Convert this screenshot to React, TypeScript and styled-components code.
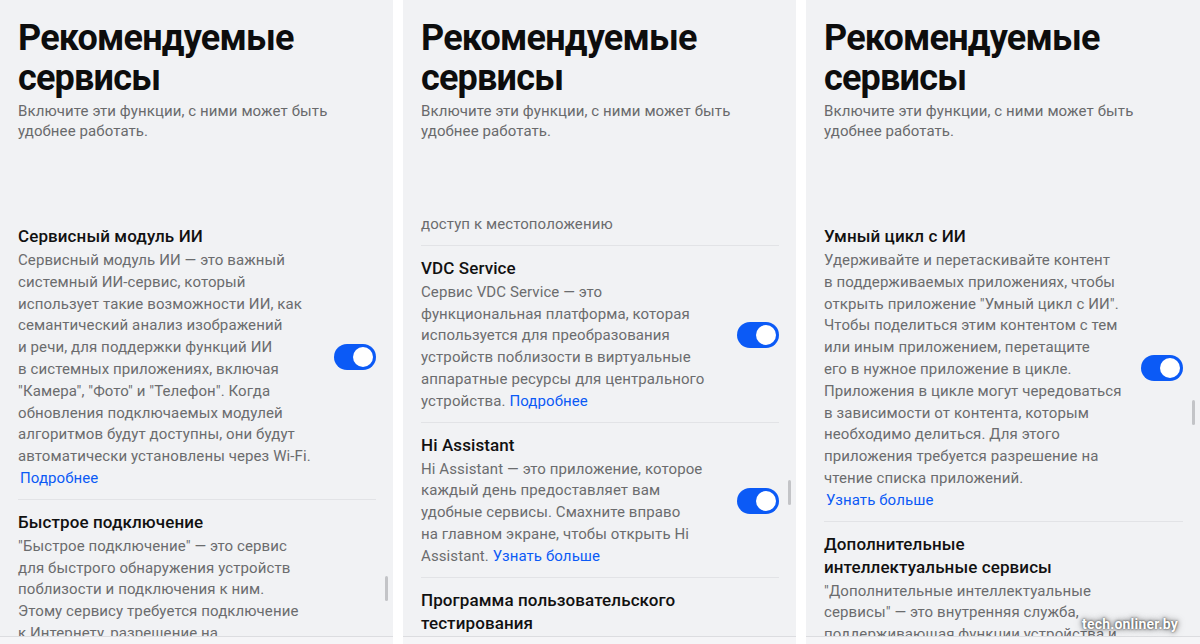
import React from "react";
import styled, { createGlobalStyle } from "styled-components";

const GlobalStyle = createGlobalStyle`
  html, body { margin: 0; padding: 0; background: #ffffff; }
  body { font-family: Roboto, "Noto Sans", "Liberation Sans", sans-serif; -webkit-font-smoothing: antialiased; }
  * { box-sizing: border-box; }
`;

const Screen = styled.div`
  display: flex;
  gap: 10px;
  width: 1200px;
  height: 644px;
  overflow: hidden;
  background: #ffffff;
`;

const Panel = styled.section<{ $w: number }>`
  position: relative;
  flex: 0 0 ${(p) => p.$w}px;
  height: 644px;
  display: flex;
  flex-direction: column;
  background: #f1f2f4;
  overflow: hidden;
`;

const Header = styled.header`
  flex: 0 0 214px;
  padding: 18px 18px 0;
`;

const Title = styled.h1`
  margin: 0;
  font-size: 36px;
  line-height: 40px;
  font-weight: 700;
  letter-spacing: -0.8px;
  color: #0d0d0d;
`;

const Subtitle = styled.p`
  margin: 3px 0 0;
  font-size: 15px;
  line-height: 20px;
  letter-spacing: 0.1px;
  color: #696a6c;
`;

const List = styled.div`
  flex: 1;
  overflow: hidden;
  padding: 0 17px 0 18px;
`;

const Item = styled.div<{ $cut?: boolean }>`
  display: flex;
  align-items: center;
  gap: 12px;
  padding: ${(p) => (p.$cut ? "0 0 9px" : "11px 0 9px")};
  border-bottom: 1px solid #e2e3e6;
  &:last-child { border-bottom: none; }
`;

const Texts = styled.div`
  flex: 1;
  min-width: 0;
`;

const ItemTitle = styled.div`
  font-size: 17px;
  line-height: 23px;
  font-weight: 500;
  letter-spacing: 0.1px;
  color: #111111;
  white-space: pre-line;
`;

const Desc = styled.div<{ $first?: boolean }>`
  margin-top: ${(p) => (p.$first ? 0 : 2)}px;
  font-size: 15px;
  line-height: 21.8px;
  letter-spacing: 0.1px;
  color: #6b6c6e;
`;

const Line = styled.span`
  display: block;
  white-space: nowrap;
`;

const Link = styled.span<{ $block?: boolean }>`
  color: #0b5af6;
  display: ${(p) => (p.$block ? "block" : "inline")};
  padding-left: ${(p) => (p.$block ? 2 : 0)}px;
`;

const Toggle = styled.div`
  position: relative;
  flex: 0 0 42px;
  height: 26px;
  border-radius: 13px;
  background: #0b5af6;
  &::after {
    content: "";
    position: absolute;
    top: 3px;
    right: 3px;
    width: 20px;
    height: 20px;
    border-radius: 50%;
    background: #ffffff;
  }
`;

const BottomBar = styled.div`
  flex: 0 0 8px;
  border-top: 1px solid #dcdde0;
  background: #f5f5f7;
`;

const Scrollbar = styled.div<{ $top: number }>`
  position: absolute;
  right: 5px;
  top: ${(p) => p.$top}px;
  width: 3px;
  height: 25px;
  border-radius: 2px;
  background: #c3c4c7;
`;

const Watermark = styled.div`
  position: absolute;
  right: 22px;
  bottom: 12px;
  font-family: Roboto, sans-serif;
  font-size: 14px;
  font-weight: 700;
  letter-spacing: 0.2px;
  color: #ffffff;
  text-shadow: 0 0 2px rgba(0, 0, 0, 0.7), 0 0 5px rgba(0, 0, 0, 0.55), 0 0 9px rgba(0, 0, 0, 0.35);
`;

type Row = {
  title?: string;
  lines: string[];
  tail?: string;
  link?: string;
  linkBlock?: boolean;
  toggle?: boolean;
  cut?: boolean;
};

const Entry: React.FC<{ row: Row }> = ({ row }) => (
  <Item $cut={row.cut}>
    <Texts>
      {row.title && <ItemTitle>{row.title}</ItemTitle>}
      {row.lines.length > 0 && (
        <Desc $first={!row.title}>
          {row.lines.map((l, i) => (
            <Line key={i}>{l}</Line>
          ))}
          {row.tail !== undefined && (
            <Line>
              {row.tail}
              {row.link && <Link>{row.link}</Link>}
            </Line>
          )}
          {row.linkBlock && row.link && <Link $block>{row.link}</Link>}
        </Desc>
      )}
    </Texts>
    {row.toggle && <Toggle />}
  </Item>
);

const Head = () => (
  <Header>
    <Title>
      Рекомендуемые
      <br />
      сервисы
    </Title>
    <Subtitle>
      Включите эти функции, с ними может быть
      <br />
      удобнее работать.
    </Subtitle>
  </Header>
);

const panel1: Row[] = [
  {
    title: "Сервисный модуль ИИ",
    lines: [
      "Сервисный модуль ИИ — это важный",
      "системный ИИ-сервис, который",
      "использует такие возможности ИИ, как",
      "семантический анализ изображений",
      "и речи, для поддержки функций ИИ",
      "в системных приложениях, включая",
      "\"Камера\", \"Фото\" и \"Телефон\". Когда",
      "обновления подключаемых модулей",
      "алгоритмов будут доступны, они будут",
      "автоматически установлены через Wi-Fi.",
    ],
    link: "Подробнее",
    linkBlock: true,
    toggle: true,
  },
  {
    title: "Быстрое подключение",
    lines: [
      "\"Быстрое подключение\" — это сервис",
      "для быстрого обнаружения устройств",
      "поблизости и подключения к ним.",
      "Этому сервису требуется подключение",
      "к Интернету, разрешение на",
      "доступ к местоположению",
    ],
  },
];

const panel2: Row[] = [
  { lines: ["доступ к местоположению"], cut: true },
  {
    title: "VDC Service",
    lines: [
      "Сервис VDC Service — это",
      "функциональная платформа, которая",
      "используется для преобразования",
      "устройств поблизости в виртуальные",
      "аппаратные ресурсы для центрального",
    ],
    tail: "устройства. ",
    link: "Подробнее",
    toggle: true,
  },
  {
    title: "Hi Assistant",
    lines: [
      "Hi Assistant — это приложение, которое",
      "каждый день предоставляет вам",
      "удобные сервисы. Смахните вправо",
      "на главном экране, чтобы открыть Hi",
    ],
    tail: "Assistant. ",
    link: "Узнать больше",
    toggle: true,
  },
  {
    title: "Программа пользовательского\nтестирования",
    lines: [],
  },
];

const panel3: Row[] = [
  {
    title: "Умный цикл с ИИ",
    lines: [
      "Удерживайте и перетаскивайте контент",
      "в поддерживаемых приложениях, чтобы",
      "открыть приложение \"Умный цикл с ИИ\".",
      "Чтобы поделиться этим контентом с тем",
      "или иным приложением, перетащите",
      "его в нужное приложение в цикле.",
      "Приложения в цикле могут чередоваться",
      "в зависимости от контента, которым",
      "необходимо делиться. Для этого",
      "приложения требуется разрешение на",
      "чтение списка приложений.",
    ],
    link: "Узнать больше",
    linkBlock: true,
    toggle: true,
  },
  {
    title: "Дополнительные\nинтеллектуальные сервисы",
    lines: [
      "\"Дополнительные интеллектуальные",
      "сервисы\" — это внутренняя служба,",
      "поддерживающая функции устройства и",
    ],
  },
];

export default function App() {
  return (
    <>
      <GlobalStyle />
      <Screen>
        <Panel $w={393}>
          <Head />
          <List>
            {panel1.map((r, i) => (
              <Entry key={i} row={r} />
            ))}
          </List>
          <BottomBar />
          <Scrollbar $top={576} />
        </Panel>
        <Panel $w={393}>
          <Head />
          <List>
            {panel2.map((r, i) => (
              <Entry key={i} row={r} />
            ))}
          </List>
          <BottomBar />
          <Scrollbar $top={480} />
        </Panel>
        <Panel $w={394}>
          <Head />
          <List>
            {panel3.map((r, i) => (
              <Entry key={i} row={r} />
            ))}
          </List>
          <BottomBar />
          <Scrollbar $top={400} />
          <Watermark>tech.onliner.by</Watermark>
        </Panel>
      </Screen>
    </>
  );
}
